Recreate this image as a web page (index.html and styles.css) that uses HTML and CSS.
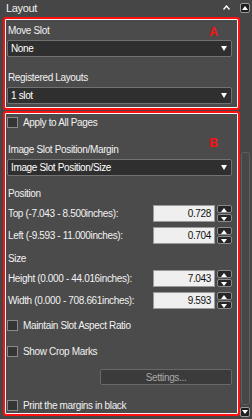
FILE: index.html
```html
<!DOCTYPE html>
<html lang="en">
<head>
    <meta charset="UTF-8">
    <title>Layout</title>
    <link rel="stylesheet" href="styles.css">
</head>
<body>
    <div class="panel">
        <div class="main">
            <div class="head">
                <span class="title">Layout</span>
                <svg class="chev" width="7" height="5" viewBox="0 0 7 5"><path d="M0.5 4.5 L3.5 1 L6.5 4.5" fill="none" stroke="#fff" stroke-width="1.4"/></svg>
            </div>

            <section class="box box-a">
                <span class="mark">A</span>
                <div class="label">Move Slot</div>
                <div class="select"><span>None</span><i class="arrow"></i></div>
                <div class="label gap">Registered Layouts</div>
                <div class="select"><span>1 slot</span><i class="arrow"></i></div>
            </section>

            <section class="box box-b">
                <span class="mark">B</span>
                <label class="check first"><i class="cb"></i>Apply to All Pages</label>
                <div class="label gap2">Image Slot Position/Margin</div>
                <div class="select"><span>Image Slot Position/Size</span><i class="arrow"></i></div>

                <div class="label sub">Position</div>
                <div class="field"><span>Top (-7.043 - 8.500inches):</span><div class="num">0.728</div><div class="spin"><i class="up"></i><i class="down"></i></div></div>
                <div class="field"><span>Left (-9.593 - 11.000inches):</span><div class="num">0.704</div><div class="spin"><i class="up"></i><i class="down"></i></div></div>

                <div class="label sub2">Size</div>
                <div class="field"><span>Height (0.000 - 44.016inches):</span><div class="num">7.043</div><div class="spin"><i class="up"></i><i class="down"></i></div></div>
                <div class="field"><span>Width (0.000 - 708.661inches):</span><div class="num">9.593</div><div class="spin"><i class="up"></i><i class="down"></i></div></div>

                <label class="check c2"><i class="cb"></i>Maintain Slot Aspect Ratio</label>
                <label class="check c3"><i class="cb"></i>Show Crop Marks</label>
                <div class="btn-row"><button class="btn" disabled>Settings...</button></div>
                <label class="check c4"><i class="cb"></i>Print the margins in black</label>
            </section>
        </div>

        <div class="scroll">
            <div class="sbtn"><i class="tri-up"></i></div>
            <div class="track"><div class="thumb"></div></div>
            <div class="sbtn"><i class="tri-down"></i></div>
        </div>
    </div>
</body>
</html>
```

FILE: styles.css
```css
html, body {
    margin: 0;
    padding: 0;
    background: #464646;
}

body {
    font-family: "Liberation Sans", Arial, sans-serif;
    font-size: 10px;
    letter-spacing: -0.35px;
    color: #f2f2f2;
}

.panel {
    width: 252px;
    height: 419px;
    display: flex;
    overflow: hidden;
}

.main {
    width: 240px;
}

.head {
    height: 17px;
    display: flex;
    align-items: flex-start;
    justify-content: space-between;
    padding: 0 10px 0 6px;
    box-sizing: border-box;
}

.title {
    font-size: 11px;
    line-height: 15px;
    margin-top: 1px;
}

.chev {
    margin-top: 5px;
}

.box {
    position: relative;
    margin-left: 3px;
    border: 2px solid #ff1010;
    border-radius: 3px;
    box-shadow: inset 0 0 0 1px #f4f4f4;
    background: #4b4b4b;
    padding: 0 6px 0 2px;
}

.box-a {
    padding-top: 5px;
    box-sizing: border-box;
    height: 93px;
}

.box-b {
    margin-top: 1px;
    height: 305px;
    box-sizing: border-box;
    padding-top: 3px;
}

.mark {
    position: absolute;
    right: 20px;
    top: 6px;
    color: #ff1010;
    font-weight: bold;
    font-size: 12px;
    letter-spacing: 0;
}

.box-b .mark {
    top: 23px;
}

.label {
    line-height: 14px;
    margin-left: 1px;
}

.label.gap {
    margin-top: 14px;
}

.label.gap2 {
    margin-top: 14px;
}

.label.sub {
    margin-top: 11px;
}

.label.sub2 {
    margin-top: 8px;
}

.select {
    height: 17px;
    margin-top: 2px;
    box-sizing: border-box;
    border: 1px solid #727272;
    border-radius: 2px;
    background: #2f2f2f;
    display: flex;
    align-items: center;
    justify-content: space-between;
    padding: 0 4px 0 3px;
    color: #fff;
}

.arrow {
    width: 0;
    height: 0;
    border-left: 3.5px solid transparent;
    border-right: 3.5px solid transparent;
    border-top: 5px solid #fff;
}

.check {
    display: flex;
    align-items: center;
    height: 13px;
    line-height: 13px;
}

.cb {
    width: 11px;
    height: 11px;
    box-sizing: border-box;
    border: 1px solid #8a8a8a;
    background: #353535;
    margin-right: 5px;
}

.field {
    display: flex;
    align-items: center;
    height: 17px;
    margin-top: 5px;
}

.label.sub + .field,
.label.sub2 + .field {
    margin-top: 4px;
}

.field span {
    flex: 1;
    margin-left: 1px;
}

.num {
    width: 62px;
    height: 17px;
    box-sizing: border-box;
    border: 1px solid #9a9a9a;
    background: #efefef;
    color: #111;
    text-align: right;
    line-height: 15px;
    padding-right: 3px;
}

.spin {
    width: 15px;
    height: 17px;
    margin-left: 2px;
    display: flex;
    flex-direction: column;
    gap: 1px;
}

.spin i {
    flex: 1;
    box-sizing: border-box;
    border: 1px solid #8a8a8a;
    border-radius: 2px;
    background: #262626;
    position: relative;
}

.spin i::after {
    content: "";
    position: absolute;
    left: 3px;
    top: 2px;
    border-left: 3.5px solid transparent;
    border-right: 3.5px solid transparent;
}

.spin .up::after {
    border-bottom: 4px solid #fff;
}

.spin .down::after {
    border-top: 4px solid #fff;
}

.check.c2 {
    margin-top: 10px;
}

.check.c3 {
    margin-top: 13px;
}

.btn-row {
    display: flex;
    justify-content: flex-end;
    margin-top: 11px;
}

.btn {
    width: 132px;
    height: 16px;
    border: 1px solid #686868;
    border-radius: 2px;
    background: #3b3b3b;
    color: #a9a9a9;
    font-family: "Liberation Sans", Arial, sans-serif;
    font-size: 10px;
    letter-spacing: -0.35px;
    padding: 0;
}

.check.c4 {
    margin-top: 14px;
}

.scroll {
    width: 12px;
    display: flex;
    flex-direction: column;
    align-items: flex-start;
    padding: 3px 0 2px 0;
    box-sizing: border-box;
}

.sbtn {
    width: 10px;
    height: 10px;
    box-sizing: border-box;
    border: 1px solid #9a9a9a;
    border-radius: 2px;
    background: #1e1e1e;
    display: flex;
    align-items: center;
    justify-content: center;
}

.tri-up {
    border-left: 3px solid transparent;
    border-right: 3px solid transparent;
    border-bottom: 4px solid #fff;
}

.tri-down {
    border-left: 3px solid transparent;
    border-right: 3px solid transparent;
    border-top: 4px solid #fff;
}

.track {
    flex: 1;
    width: 10px;
    padding: 139px 0 2px 1px;
    box-sizing: border-box;
    display: flex;
}

.thumb {
    flex: 1;
    border: 1px solid #5e5e5e;
    border-radius: 3px;
    background: #474747;
}
```
